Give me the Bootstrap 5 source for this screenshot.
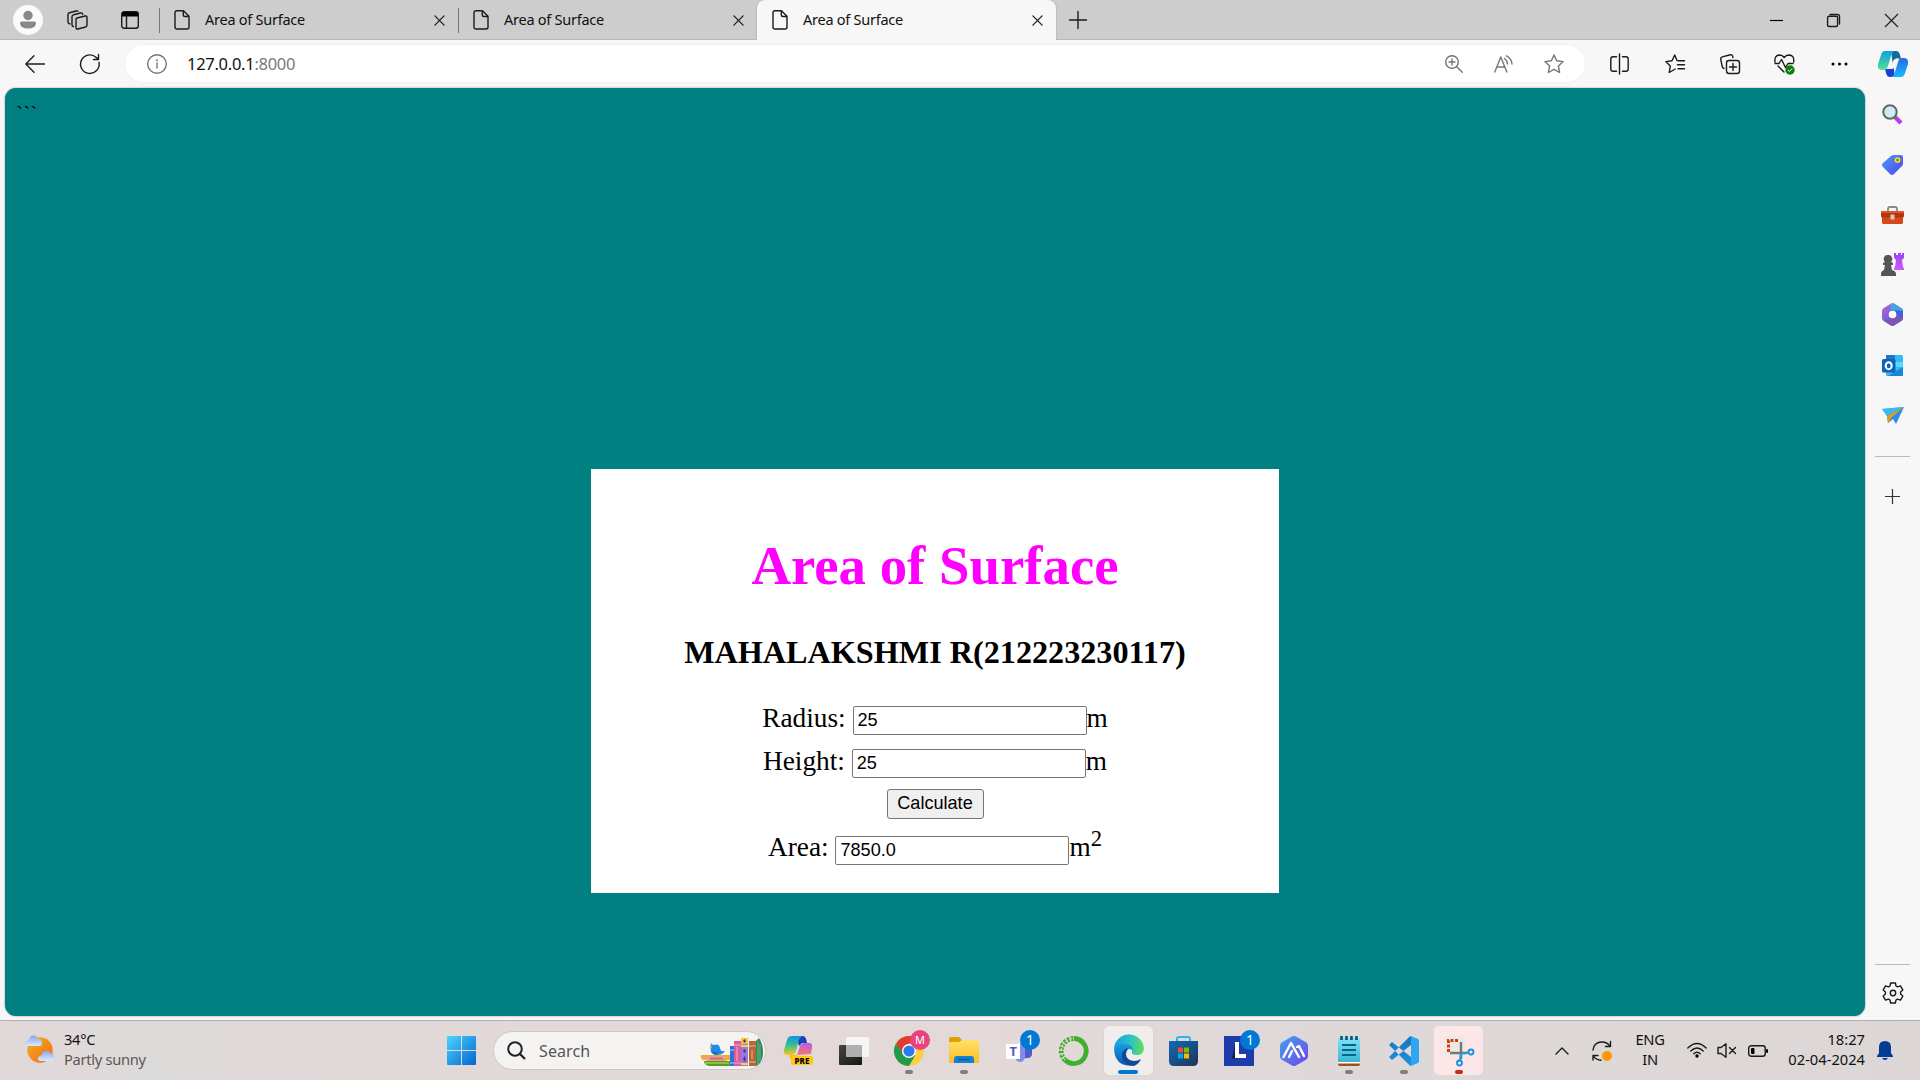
<!DOCTYPE html>
<html lang="en">
<head>
<meta charset="utf-8">
<title>Area of Surface</title>
<link href="https://cdn.jsdelivr.net/npm/bootstrap@5.3.0/dist/css/bootstrap.min.css" rel="stylesheet">
<style>
body{width:1920px;height:1080px;overflow:hidden;background:#f7f7f7;font-family:"Noto Sans",sans-serif;font-size:14.5px;line-height:20px;color:#111}
svg{display:block;flex:none;overflow:visible}
.ln{fill:none;stroke:#1b1b1b;stroke-width:1.4;stroke-linecap:round;stroke-linejoin:round}
.gr{stroke:#767676}
.tabstrip{height:40px;background:#cdcdcd;box-shadow:inset 0 -1px #b9b9b9}
.slot{display:flex;align-items:center;justify-content:center;flex:none}
.tab{width:299px;height:40px;padding:0 13px 0 15px;position:relative}
.tab .ttl{margin-left:15px;font-size:14.5px;letter-spacing:-.25px;line-height:38px;padding-bottom:2px;color:#111}
.tab.sep::before{content:"";position:absolute;left:0;top:8px;width:1px;height:25px;background:#777}
.tab.active{background:#f7f7f7;border-radius:8px 8px 0 0;box-shadow:0 0 2px #999;clip-path:inset(-2px -2px 0 -2px)}
.toolbar{height:48px;padding-top:5px}
.address{width:1460px;height:37px;border-radius:19px;background:#fff;margin-left:8px;box-shadow:0 0 3px #e9e9e9}
.url{font-size:16.5px;letter-spacing:-.28px;line-height:34px;color:#111}
.url span{color:#7a7a7a}
.page{width:1860px;height:928px;margin-left:5px;border-radius:11px;background:#008080;box-shadow:0 0 2px #888;font-family:"Liberation Serif",serif;color:#000;padding-top:10px}
.ticks{font-size:21.5px;height:31px;line-height:32px;padding-left:11px}
.surface{width:688px;height:424px;background:#fff;margin:340px 0 0 586px;font-size:27.3px;line-height:31px}
.surface h1{font-size:54.8px;line-height:62px;font-weight:700;color:#f0f;padding-top:66px;margin:0}
.surface h3{font-size:32.2px;line-height:36px;font-weight:700;margin:37px 0 0}
.frow{height:43px;white-space:pre}
.frow input{width:234px;height:29px;border:1px solid #767676;border-radius:2px;padding:0 3px 0 4px;font:18.1px "Liberation Sans",sans-serif;color:#000;background:#fff;margin:3px 0 0}
.calc{width:97px;height:30px;border:1px solid #767676;border-radius:3px;background:#efefef;font:18.1px "Liberation Sans",sans-serif;padding:0 0 2px;color:#000}
.frow .sq{font-size:22.6px;line-height:20px;margin-top:-3px}
.edgebar{width:55px}
.edgebar .slot{width:55px;height:50.1px}
.edgebar .rule{width:35px;height:1px;background:#bbb;margin-left:10px}
.taskbar{height:60px;border-top:1px solid #b3adad;background:linear-gradient(90deg,#e1d8d8 0,#dddada 150px,#e1d8d8 330px,#e3d9d8 900px,#dfd8d8 1300px,#dcd7d6 1920px)}
.wx{font-size:14.7px;line-height:20px;letter-spacing:-.3px;padding-bottom:4px}
.searchbox{width:273px;height:39px;border-radius:20px;background:#f5f3f2;border:1px solid #cfc7c7;margin-left:17px;padding:0 2px 0 13px}
.app{width:55px;height:59px;position:relative}
.app.run::after{content:"";position:absolute;left:24px;top:49px;width:8px;height:4px;border-radius:2px;background:#837c7c}
.app .plate{position:absolute;left:3px;top:5px;width:49px;height:49px;border-radius:5px;background:#f1edec;box-shadow:0 0 1px #bbb}
.app .plate.rose{background:#fde6e7;box-shadow:none}
.app svg{position:relative}
.app.on::after{content:"";position:absolute;left:17px;top:49px;width:20px;height:4px;border-radius:2px;background:#0078d4}
.app.red::after{background:#c42b1c}
svg text{font-family:"Noto Sans",sans-serif}
</style>
<script src="https://cdn.jsdelivr.net/npm/bootstrap@5.3.0/dist/js/bootstrap.bundle.min.js"></script>
</head>
<body class="d-flex flex-column">
<svg width="0" height="0" class="position-absolute"><defs>
<linearGradient id="w" x2="1" y2="1"><stop stop-color="#4fd3ff"/><stop offset="1" stop-color="#0067cc"/></linearGradient>
<linearGradient id="sun" x2="1" y2="1"><stop stop-color="#e8b62c"/><stop offset="1" stop-color="#f9650c"/></linearGradient>
<linearGradient id="cloud" y2="1" x2="0"><stop stop-color="#86a6e3"/><stop offset="1" stop-color="#dbe9fb"/></linearGradient>
<linearGradient id="tag" x2="1" y2="1"><stop stop-color="#4a9bff"/><stop offset="1" stop-color="#5146e6"/></linearGradient>
<linearGradient id="c1" x2="0" y2="1"><stop stop-color="#0aa0e8"/><stop offset="1" stop-color="#55e08c"/></linearGradient>
<linearGradient id="c2" x2="0" y2="1"><stop stop-color="#2568e6"/><stop offset="1" stop-color="#17b9fa"/></linearGradient>
<linearGradient id="p1" x2="0" y2="1"><stop stop-color="#1590f0"/><stop offset=".5" stop-color="#38c28b"/><stop offset="1" stop-color="#ffc51c"/></linearGradient>
<linearGradient id="p2" x2="0" y2="1"><stop stop-color="#b45cf0"/><stop offset="1" stop-color="#ff765e"/></linearGradient>
<linearGradient id="rook" x2="0" y2="1"><stop stop-color="#9a40f4"/><stop offset="1" stop-color="#cc5cff"/></linearGradient>
<linearGradient id="m3" x2="1" y2="1"><stop stop-color="#b76ad6"/><stop offset="1" stop-color="#4152d0"/></linearGradient>
<linearGradient id="fold" x2="0" y2="1"><stop stop-color="#ffe16a"/><stop offset="1" stop-color="#fbbd20"/></linearGradient>
<linearGradient id="e1" x2="1" y2="0"><stop stop-color="#1a9ce0"/><stop offset=".55" stop-color="#2bc3c8"/><stop offset="1" stop-color="#63e054"/></linearGradient>
<linearGradient id="e2" x2="0" y2="1"><stop stop-color="#1b9de2"/><stop offset="1" stop-color="#0a58b6"/></linearGradient>
<linearGradient id="st" x2="1" y2="1"><stop stop-color="#0f6bb8"/><stop offset="1" stop-color="#213455"/></linearGradient>
<linearGradient id="ai" x2="1" y2="1"><stop stop-color="#3da4e8"/><stop offset="1" stop-color="#7443f2"/></linearGradient>
<linearGradient id="np" x2="0" y2="1"><stop stop-color="#7fe3f2"/><stop offset="1" stop-color="#3bb4d6"/></linearGradient>
<linearGradient id="vs" x2="0" y2="1"><stop stop-color="#1676c0"/><stop offset="1" stop-color="#2090e0"/></linearGradient>
<linearGradient id="tv" x2="1" y2="1"><stop stop-color="#444"/><stop offset="1" stop-color="#161616"/></linearGradient>
<symbol id="doc" viewBox="0 0 16 20"><path class="ln" d="M3 .8h6.500L15 6.300V17q0 2-2 2H3q-2 0-2-2V2.800q0-2 2-2zM9.300.8V5q0 1.500 1.500 1.500H15" stroke-width="1.500"/></symbol>
<symbol id="cls" viewBox="0 0 12 12"><path class="ln" d="M1 1l10 10M11 1L1 11" stroke-width="1.500"/></symbol>
</defs></svg>

<!-- Tab strip -->
<header class="tabstrip d-flex align-items-center flex-shrink-0">
 <div class="slot" style="width:56px"><svg width="30" height="30" viewBox="0 0 30 30"><circle cx="15" cy="15" r="15" fill="#fafafa"/><circle cx="15" cy="10.500" r="4.700" fill="#8b8885"/><path d="M8.500 16.500h13q1.500 0 1.500 2-.7 5-8 5t-8-5q0-2 1.500-2z" fill="#8b8885"/></svg></div>
 <div class="slot" style="width:43px"><svg width="21" height="20" viewBox="0 0 21 20"><path class="ln" d="M10 8l8-2q2-.4 2 1.500v7.500q0 1.500-1.500 2L11 19q-2 .4-2-1.500v-8Q9 8.300 10 8zM6.500 16.500q-1.500 0-1.500-2v-8Q5 5.300 6.500 4.800L13.500 3q2-.4 2.200 1.200M3 14q-2-.3-2-2V4.500Q1 3.200 2.500 2.800L9 1q1.500-.4 2 .3"/></svg></div>
 <div class="slot" style="width:60px;padding-left:2px"><svg width="18" height="18" viewBox="0 0 18 18"><rect class="ln" x=".7" y=".7" width="16.600" height="16.600" rx="2.500"/><path d="M1 1h16v4.500H1z"/><path class="ln" d="M5.500 5v12"/></svg></div>
 <div class="tab sep d-flex align-items-center"><svg width="16" height="20"><use href="#doc"/></svg><span class="ttl flex-grow-1">Area of Surface</span><svg width="11" height="11"><use href="#cls"/></svg></div>
 <div class="tab sep d-flex align-items-center"><svg width="16" height="20"><use href="#doc"/></svg><span class="ttl flex-grow-1">Area of Surface</span><svg width="11" height="11"><use href="#cls"/></svg></div>
 <div class="tab active d-flex align-items-center"><svg width="16" height="20"><use href="#doc"/></svg><span class="ttl flex-grow-1">Area of Surface</span><svg width="11" height="11"><use href="#cls"/></svg></div>
 <div class="slot" style="width:43px"><svg width="18" height="18" viewBox="0 0 18 18"><path class="ln" d="M9 .5v17M.5 9h17"/></svg></div>
 <div class="d-flex ms-auto">
  <div class="slot" style="width:57px"><svg width="13" height="13"><path d="M0 6.500h13" stroke="#000" stroke-width="1.200"/></svg></div>
  <div class="slot" style="width:57px"><svg width="13" height="13" viewBox="0 0 13 13"><rect class="ln" x=".6" y="2.200" width="10" height="10.300" rx="1.500"/><path class="ln" d="M3 .5h7.500q2 0 2 2V10"/></svg></div>
  <div class="slot" style="width:58px"><svg width="13" height="13"><path d="M0 0l13 13M13 0L0 13" stroke="#222" stroke-width="1.200"/></svg></div>
 </div>
</header>

<!-- Toolbar -->
<div class="toolbar d-flex flex-shrink-0 align-items-start">
 <div class="slot" style="width:62px;height:37px;padding-left:8px"><svg width="20" height="18" viewBox="0 0 20 18"><path class="ln" d="M19.500 9H.8M9 .8L.8 9 9 17.200"/></svg></div>
 <div class="slot" style="width:55px;height:37px"><svg width="20" height="20" viewBox="0 0 20 20"><path class="ln" d="M19 8.500A9.300 9.300 0 1 1 16 3.200L18.300 5M18.500.5v5H13.500"/></svg></div>
 <div class="address d-flex align-items-center">
  <div class="slot" style="width:62px;padding-left:2px"><svg width="20" height="20" viewBox="0 0 20 20"><circle class="ln gr" cx="10" cy="10" r="9.300"/><path class="ln gr" d="M10 9v5"/><circle cx="10" cy="6.200" r="1" fill="#767676"/></svg></div>
  <div class="url">127.0.0.1<span>:8000</span></div>
  <div class="d-flex ms-auto">
   <div class="slot" style="width:51px"><svg width="18" height="18" viewBox="0 0 18 18"><circle class="ln gr" cx="7" cy="7" r="6.300"/><path class="ln gr" d="M7 4v6M4 7h6M11.700 11.700l5.600 5.600"/></svg></div>
   <div class="slot" style="width:50px"><svg width="20" height="18" viewBox="0 0 20 18"><path class="ln gr" d="M.8 17L6.800 2l6 15M3 12h8M10.500 3.500q3 2 3 5.500M12.500.8Q18 4 18 9"/></svg></div>
   <div class="slot" style="width:56px;padding-right:6px"><svg width="20" height="20" viewBox="0 0 20 20"><path class="ln gr" d="M10 1l2.700 5.800 6.400.8-4.700 4.400 1.200 6.500-5.600-3.200-5.600 3.200L5.600 12 .9 7.600l6.400-.8z"/></svg></div>
  </div>
 </div>
 <div class="d-flex" style="margin-left:7px">
  <div class="slot" style="width:55px;height:37px"><svg width="19" height="20" viewBox="0 0 19 20"><path class="ln" d="M9.500 0v20M6.500 2.700H3Q.8 2.700.8 5v10q0 2.300 2.200 2.300h3.500M12.500 2.700H16q2.200 0 2.200 2.300v10q0 2.300-2.200 2.300h-3.500"/></svg></div>
  <div class="slot" style="width:55px;height:37px"><svg width="20" height="20" viewBox="0 0 20 20"><path class="ln" d="M12 6.500L9.700 1 7 6.800l-6.200.8 4.500 4.400-1.100 6.500 6-3.500M13 6.700h6.500M12.500 10.700h7M13 14.700h6.500"/></svg></div>
  <div class="slot" style="width:55px;height:37px"><svg width="20" height="20" viewBox="0 0 20 20"><rect class="ln" x="6.500" y="6.500" width="13" height="13" rx="2.500"/><path class="ln" d="M13 9.500v7M9.500 13h7M4 14.500q-1.500-.5-1.800-2L.7 5Q.5 3.300 2.300 2.800L10.500.7q1.700-.3 2.200 1.500l.3 1.300"/></svg></div>
  <div class="slot" style="width:55px;height:37px"><svg width="21" height="20" viewBox="0 0 21 20"><path class="ln" d="M1 8Q.2 1.200 5.500 1q3 0 4.700 2.500Q12 1 15 1q5.500.2 4.700 7M4 12l6 6M1 9.500h4l2.500-4 4 8 2.500-4h5"/><circle cx="16" cy="16" r="4.700" fill="#107c10"/><path d="M13.800 16l1.600 1.500 2.700-3" stroke="#fff" fill="none"/></svg></div>
  <div class="slot" style="width:55px;height:37px"><svg width="17" height="4"><circle cx="2" cy="2" r="1.500"/><circle cx="8.500" cy="2" r="1.500"/><circle cx="15" cy="2" r="1.500"/></svg></div>
  <div class="slot" style="width:52px;height:37px"><svg width="30" height="26" viewBox="0 0 30 26"><path d="M13 0h5q3 0 4 4l1 4h-4q-2 0-3 3l-1 3z" fill="#17689a"/><path d="M17 26h-5q-3 0-4-4l-1-4h4q2 0 3-3l1-3z" fill="#1a40d2"/><path d="M7 0h10q-3 1-4 5l-3 10q-1 4-5 4H4q-5 0-4-6l3-9Q4 0 7 0z" fill="url(#c1)"/><path d="M23 26H13q3-1 4-5l3-10q1-4 5-4h1q5 0 4 6l-3 9q-1 4-4 4z" fill="url(#c2)"/><path d="M17 8q2-1 4-1-2 1-3 5-1 6-5 6h-2q2-1 3-5 1-4 3-5z" fill="#f7f7f7"/></svg></div>
 </div>
</div>

<!-- Page and side bar -->
<div class="d-flex flex-shrink-0" style="height:932px">
 <main class="page flex-shrink-0">
  <div class="ticks">```</div>
  <section class="surface text-center">
   <h1>Area of Surface</h1>
   <h3>MAHALAKSHMI R(212223230117)</h3>
   <div style="padding-top:33px">
    <div class="frow d-flex justify-content-center"><span>Radius: </span><input value="25"><span>m</span></div>
    <div class="frow d-flex justify-content-center"><span>Height: </span><input value="25"><span>m</span></div>
    <div class="d-flex justify-content-center" style="height:43px"><button class="calc">Calculate</button></div>
    <div class="frow d-flex justify-content-center"><span>Area: </span><input value="7850.0" style="margin-top:4px"><span>m</span><span class="sq">2</span></div>
   </div>
  </section>
 </main>
 <aside class="edgebar d-flex flex-column" style="padding-top:1.5px">
  <div class="slot"><svg width="21" height="21" viewBox="0 0 21 21"><path d="M13 13l6 6" stroke="#b63df5" stroke-width="4.500"/><path d="M12 12l3 3" stroke="#777" stroke-width="2.500"/><circle cx="8" cy="8" r="6.700" fill="#cbeafa" stroke="#666" stroke-width="2"/></svg></div>
  <div class="slot"><svg width="21" height="21" viewBox="0 0 21 21"><path d="M12 1h7q2 0 2 2v7q0 1-1 2l-8 8q-2 2-4 0l-7-7q-2-2 0-4l8-7q1.500-1 3-1z" fill="url(#tag)"/><circle cx="15.500" cy="6" r="2.200" fill="#9c8a18" stroke="#ffe92e" stroke-width="1.300"/></svg></div>
  <div class="slot"><svg width="23" height="18" viewBox="0 0 23 18"><path d="M7 5V3q0-2 2-2h5q2 0 2 2v2" fill="none" stroke="#888" stroke-width="1.800"/><rect x="1" y="9" width="21" height="9" rx="1.500" fill="#d6491d"/><rect y="5" width="23" height="6.500" rx="1.500" fill="#b83310"/><rect y="5" width="23" height="2" rx="1" fill="#e05722"/><rect x="9.500" y="8.500" width="4" height="5" rx="1" fill="#ccc"/></svg></div>
  <div class="slot"><svg width="23" height="23" viewBox="0 0 23 23"><path d="M13 0h2v2h2V0h3v2h1V0h2v5l-2 2 1 7 1 1v2H13v-2l1-1 1-7-2-2z" fill="url(#rook)"/><path d="M7 2a4 4 0 0 1 3 7l2 1v2h-2l1 5q4 1 4 4v2H0v-2q0-3 3-4l1-5H2v-2l2-1a4 4 0 0 1 3-7z" fill="#555"/></svg></div>
  <div class="slot"><svg width="21" height="23" viewBox="0 0 21 23"><path d="M9 .6q1.500-.8 3 0l7.500 4.600Q21 6 21 8v7q0 2-1.500 2.800L12 22.400q-1.500.8-3 0l-7.500-4.600Q0 17 0 15V8q0-2 1.500-2.800z" fill="url(#m3)"/><path d="M12 .6l7.500 4.600Q21 6 21 8v7l-7-4-1-3-5-2 1-5q1-1 3-.4z" fill="#41a6e8"/><path d="M21 14v1q0 2-1.500 2.800L12 22.400q-1.500.8-3 0L1.500 17.800 9 15l5-2z" fill="#7d55b4"/><path d="M13 7l8 1v7l-7-4z" fill="#4360d4"/><circle cx="10.500" cy="11.500" r="3.800" fill="#fff"/></svg></div>
  <div class="slot"><svg width="21" height="21" viewBox="0 0 21 21"><rect x="4" width="17" height="21" rx="1.500" fill="#39b9f2"/><path d="M4 0h9v7H4z" fill="#1c78c9"/><path d="M13 7h8v5l-8 0z" fill="#52dcff"/><path d="M6 21l15-9v8q0 1-1 1z" fill="#1687d9"/><rect y="4" width="13.500" height="13.500" rx="1.500" fill="#0f63b8"/><ellipse cx="6.700" cy="10.700" rx="3" ry="3.500" fill="none" stroke="#fff" stroke-width="2"/></svg></div>
  <div class="slot"><svg width="22" height="17" viewBox="0 0 22 17"><path d="M0 2L22 0 14 17l-3-5-5 4-1-7z" fill="#2a8cec"/><path d="M0 2L22 0 5 9z" fill="#35bdf3"/><path d="M5 9L22 0 10 10l-4 6z" fill="#e99a12"/></svg></div>
  <div class="rule" style="margin-top:16px"></div>
  <div class="slot" style="height:78px"><svg width="15" height="15"><path d="M7.500 0v15M0 7.500h15" stroke="#333" stroke-width="1.200"/></svg></div>
  <div class="rule mt-auto"></div>
  <div class="slot" style="height:55px"><svg width="22" height="22" viewBox="0 0 22 22"><path class="ln" d="M8.600 1h4.800l.6 3 1.500.9 3-1 2.300 4-2.200 2v2.200l2.200 2-2.300 4-3-1-1.500.9-.6 3H8.600L8 18l-1.500-.9-3 1-2.300-4 2.200-2V9.900l-2.200-2 2.300-4 3 1L8 4z" stroke-width="1.600"/><circle class="ln" cx="11" cy="11" r="2.700"/></svg></div>
 </aside>
</div>

<!-- Taskbar -->
<footer class="taskbar d-flex align-items-center flex-shrink-0">
 <svg width="30" height="28" viewBox="0 0 30 28" style="margin:0 0 4px 25px"><circle cx="15" cy="15" r="12.700" fill="url(#sun)"/><path d="M2 11q-3-1-2-3.500Q1 5 4 5q0-4 4-4.500T13 4q4 0 4 4 0 3-3 3z" fill="url(#cloud)"/><path transform="translate(13 15)" d="M2 11q-3-1-2-3.500Q1 5 4 5q0-4 4-4.500T13 4q4 0 4 4 0 3-3 3z" fill="url(#cloud)"/></svg>
 <div class="wx" style="width:392px;padding-left:9px"><div>34°C</div><div style="color:#5b5656">Partly sunny</div></div>
 <svg width="29" height="29" viewBox="0 0 29 29"><path fill="url(#w)" d="M1 0h13v14H0V1q0-1 1-1zM15 0h13q1 0 1 1v13H15zM0 15h14v14H1q-1 0-1-1zM15 15h14v13q0 1-1 1H15z"/></svg>
 <div class="searchbox d-flex align-items-center">
  <svg width="19" height="19" viewBox="0 0 19 19"><circle cx="8" cy="8" r="6.800" fill="none" stroke="#222" stroke-width="2"/><path d="M13 13l5 5" stroke="#222" stroke-width="2.300"/></svg>
  <span class="flex-grow-1" style="padding-left:13px;font-size:16px;color:#555;letter-spacing:.1px">Search</span>
  <svg width="63" height="29" viewBox="0 0 63 29" style="margin-top:3px"><path d="M4 23h26v5H9q-5-1-5-5z" fill="#5a9c28"/><path d="M5 25h24" stroke="#99cf4b" stroke-width="1.500"/><path d="M1 17h29v5H3q-3-2-2-5z" fill="#e9ae39"/><path d="M7 18h19q-2 3 1 5H7q-3-2 0-5z" fill="#f19b8e"/><rect x="10" y="19.500" width="13" height="2" fill="#cd7466"/><path d="M11 5q1 2 3 2 5-2 6 3l1 3h4l-3 3q-8 3-11-2-1-4 0-9z" fill="#2389e8"/><path d="M12 13q4 3 7-1l-2 4h-4z" fill="#116bc0"/><path d="M9 9l3-1v2z" fill="#f0a020"/><rect x="30" y="8" width="4" height="20" fill="#2e73d3"/><path d="M30 12h4M30 25h4" stroke="#a7cbff"/><rect x="34" y="3" width="7" height="25" fill="#d95c9c"/><path d="M34 7h7M34 25h7M37 9v14" stroke="#f2a9cd"/><rect x="41" y="1" width="7" height="27" fill="#9a78d8"/><path d="M41 8h7M41 26h7" stroke="#ffd04c" stroke-width="2"/><path d="M44.500 11l1.500 2-1.500 2-1.500-2zM44.500 18l1.500 3-1.500 3-1.500-3z" fill="#5130a1"/><path d="M41 0h7v6h-7z" fill="#f3c331"/><path d="M44.500 1l1.500 2-1.500 2L43 3z" fill="#5130a1"/><rect x="49" y="3" width="7" height="25" fill="#b5673a"/><path d="M49 8h7M49 24h7M52 12v9" stroke="#f0b788"/><path d="M56 3l3-3q4 6 4 14t-4 12l-3 2z" fill="#2f875a"/><path d="M58 3v23M60 6v17" stroke="#69ba84"/></svg>
 </div>
 <div class="d-flex" style="margin-left:5px">
  <div class="app slot"><svg width="29" height="29" viewBox="0 0 29 29"><path d="M12 0h7q3 0 4 7h-5l-3 3z" fill="#1742b8"/><path d="M8 0h11q-4 1-5 7l-2 8q-1 4-5 4H3q-4 0-3-5l3-10Q4 0 8 0z" fill="url(#p1)"/><path d="M13 19l3-9q1-3 5-3h4q4 0 3 5l-1 6z" fill="url(#p2)"/><path d="M5 19h8v5q-5 1-7-2z" fill="#ffb923"/><rect x="7" y="20" width="22" height="9" rx="2" fill="#ffc814"/><text x="18" y="27.500" font-size="8" font-weight="800" text-anchor="middle">PRE</text></svg></div>
  <div class="app slot"><svg width="30" height="28" viewBox="0 0 30 28"><rect y="8" width="23" height="20" rx="1" fill="url(#tv)"/><rect x="7" width="23" height="20" rx="1" fill="#fff" opacity=".72"/><rect x="7" y="8" width="16" height="12" fill="#999" opacity=".5"/></svg></div>
  <div class="app slot run"><svg width="30" height="30" viewBox="0 0 30 30"><circle cx="15" cy="15" r="15" fill="#ffcd40"/><path d="M2 7.500A15 15 0 0 1 28 7.500H15L9 19z" fill="#e33b2e"/><path d="M2 7.500A15 15 0 0 0 15 30l6.500-11L9 18z" fill="#229a4b"/><circle cx="15" cy="15" r="7" fill="#fff"/><circle cx="15" cy="15" r="5.600" fill="#2c78ed"/><circle cx="26" cy="4" r="10" fill="#e8437e"/><text x="26" y="8" fill="#fff" font-size="11" text-anchor="middle">M</text></svg></div>
  <div class="app slot run"><svg width="30" height="27" viewBox="0 0 30 27"><path d="M0 2q0-2 2-2h8l3 3-3 4H0z" fill="#dfa000"/><path d="M0 5h10l3-2h16q1 0 1 1v21q0 1-1 1H1q-1 0-1-1z" fill="url(#fold)"/><path d="M5 26v-4q0-3 3-3h14q3 0 3 3v4z" fill="#1580d0"/><path d="M9 22.500h12" stroke="#055da6" stroke-width="1.500"/></svg></div>
  <div class="app slot"><svg width="30" height="30" viewBox="0 0 30 30"><path d="M19 10h9v9q-2 4-8 3z" fill="#515bd0"/><path d="M12 8h9v13q-1 5-5 5t-6-6z" fill="#838ce9"/><rect x="2" y="8" width="14" height="15" fill="#fff"/><text x="9.200" y="20" font-size="13" font-weight="700" fill="#5359bd" text-anchor="middle">T</text><circle cx="26" cy="4" r="10" fill="#0078d4"/><text x="26" y="9" fill="#fff" font-size="14" text-anchor="middle">1</text></svg></div>
  <div class="app slot"><svg width="30" height="30" viewBox="0 0 30 30"><path d="M15 2.500a12.500 12.500 0 1 1-9 21.500" fill="none" stroke="#3eb02b" stroke-width="4.800"/><path d="M6 24A12.500 12.500 0 0 1 15 2.500" fill="none" stroke="#3eb02b" stroke-width="4.800" stroke-dasharray="2.500 1.300"/><path d="M6 24A12.500 12.500 0 0 1 15 2.500" fill="none" stroke="#e2d9d8" stroke-width="1" stroke-dasharray="3 2"/></svg></div>
  <div class="app slot on"><span class="plate"></span><svg width="30" height="30" viewBox="0 0 30 30"><path d="M0 14A15 15 0 0 1 30 13q-1 6-7 6-6 0-5-3 1-5-5-6Q4 9 0 14z" fill="url(#e1)"/><path d="M0 14Q4 6 12 8q7 1 7 7-1-2-4-2-5 1-5 7 1 8 10 9Q2 32 0 14z" fill="url(#e2)"/><path d="M13 12q-6 3-5 9 2 9 12 9 5-2 7-7-3 2-7 2-8-1-8-7 0-3 2-5z" fill="#104a94"/></svg></div>
  <div class="app slot"><svg width="29" height="30" viewBox="0 0 29 30"><path d="M8 7V3q0-2 2-2h9q2 0 2 2v4" fill="none" stroke="#24b7f3" stroke-width="2"/><path d="M0 5h29v20q0 5-5 5H5q-5 0-5-5z" fill="url(#st)"/><path fill="#f25022" d="M9 11.500h5v5H9z"/><path fill="#7fba00" d="M15 11.500h5v5h-5z"/><path fill="#00a4ef" d="M9 17.500h5v5H9z"/><path fill="#ffb900" d="M15 17.500h5v5h-5z"/></svg></div>
  <div class="app slot"><svg width="30" height="30" viewBox="0 0 30 30"><path d="M0 0h30v30H0z" fill="#1e3caa"/><path d="M11 7l-3 16 8-1z" fill="#0a2446"/><path d="M13 6v14h9" fill="none" stroke="#fff" stroke-width="4"/><circle cx="26" cy="4" r="10" fill="#0078d4"/><text x="26" y="9" fill="#fff" font-size="14" text-anchor="middle">1</text></svg></div>
  <div class="app slot"><svg width="28" height="30" viewBox="0 0 28 30"><path d="M12 .6q2-1 4 0l10 5.600q2 1.300 2 3.500v10.600q0 2.200-2 3.500L16 29.400q-2 1-4 0L2 23.800q-2-1.300-2-3.500V9.700q0-2.200 2-3.500z" fill="url(#ai)"/><path d="M3.500 21L11 7l8 14M9 21l3-6M17 11l2-1 5 10" fill="none" stroke="#fff" stroke-width="2.400" stroke-linecap="round" stroke-linejoin="round"/></svg></div>
  <div class="app slot run"><svg width="22" height="30" viewBox="0 0 22 30"><path d="M0 27h22v1q0 2-2 2H2q-2 0-2-2z" fill="#a44f0d"/><rect y="24" width="22" height="3.500" fill="#fff"/><path d="M0 4q0-2 2-2h18q2 0 2 2v22H0z" fill="url(#np)"/><path d="M4 9h14M4 14h14M4 19h14" stroke="#04648b" stroke-width="2"/><path d="M3.500 0v4M8.500 0v4M13.500 0v4M18.500 0v4" stroke="#07577c" stroke-width="2.600"/></svg></div>
  <div class="app slot run"><svg width="30" height="30" viewBox="0 0 30 30"><path d="M22 0v9L3 24l-3-3L20.500.8zM22 30v-9L3 6 0 9l20.500 20.200z" fill="url(#vs)"/><path d="M22 0l7 3q1 .5 1 2v20q0 1.500-1 2l-7 3z" fill="#2da7f1"/></svg></div>
  <div class="app slot run red"><span class="plate rose"></span><svg width="30" height="30" viewBox="0 0 30 30"><rect width="21" height="21" rx="3" fill="#ece8e7"/><path d="M4.500 16V4.500H15" fill="none" stroke="#d83b01" stroke-width="3" stroke-dasharray="3 1.500"/><path d="M17 6v17M6 17h17" stroke="#777" stroke-width="2.500"/><path d="M17 17l-1 7M19 17.500l5-1" stroke="#18a0e5" stroke-width="2"/><circle cx="15.500" cy="27" r="2.500" fill="none" stroke="#1490df" stroke-width="1.800"/><circle cx="27" cy="16" r="2.500" fill="none" stroke="#1490df" stroke-width="1.800"/></svg></div>
 </div>
 <div class="d-flex align-items-center ms-auto">
  <div class="slot" style="width:34px"><svg width="14" height="8"><path class="ln" d="M1 7l6-6 6 6" stroke-width="2"/></svg></div>
  <div class="slot" style="width:46px"><svg width="20" height="20" viewBox="0 0 20 20"><path class="ln" d="M1 9Q2 1 10 1q5 0 8 4M18.500.5v5H13.500M1 19v-4.500h5M1.500 15Q4 19 9 19.300"/><circle cx="15" cy="15" r="5" fill="#ff9800"/></svg></div>
  <div class="wx text-center" style="width:50px"><div>ENG</div><div>IN</div></div>
  <div class="slot" style="width:43px"><svg width="20" height="15" viewBox="0 0 20 15"><path class="ln" d="M.8 5Q10-4 19.200 5M3.800 8q6.200-6 12.400 0M6.800 10.800q3.200-3 6.400 0"/><circle cx="10" cy="13" r="1.700"/></svg></div>
  <div class="slot" style="width:17px"><svg width="20" height="15" viewBox="0 0 20 15"><path class="ln" d="M1 4.500h3L9 .8v13.400l-5-3.700H1zM12.500 4.500l6 6M18.500 4.500l-6 6" stroke-width="1.200"/></svg></div>
  <div class="slot" style="width:45px"><svg width="20" height="12" viewBox="0 0 20 12"><rect class="ln" x=".7" y=".7" width="16.500" height="10.600" rx="2.500"/><rect x="3" y="3" width="3.500" height="6" rx="1"/><rect x="18" y="4" width="2" height="4" rx="1"/></svg></div>
  <div class="wx text-end" style="width:85px;letter-spacing:0"><div>18:27</div><div>02-04-2024</div></div>
  <svg width="16" height="19" viewBox="0 0 16 19" style="margin:0 27px 0 12px"><path d="M8 0q6 0 6 6v6l2 3v1H0v-1l2-3V6q0-6 6-6zM5 17h6q-1 2-3 2t-3-2z" fill="#003e92"/></svg>
 </div>
</footer>
</body>
</html>
